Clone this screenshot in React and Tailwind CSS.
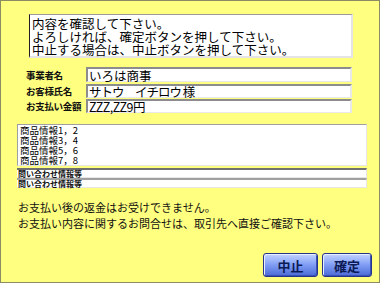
import React from 'react';

const jp = { fontFamily: '"Noto Sans CJK JP", "Noto Sans", sans-serif' };

function Field({ label, value, className = '', valueClass = '' }) {
  return (
    <div className={`flex items-center ${className}`}>
      <div className="w-[60px] pl-[25px] box-content shrink-0 text-[9.5px] font-bold leading-[12px] text-[#101010] whitespace-nowrap tracking-[-0.3px]">
        {label}
      </div>
      <div className="w-[266px] h-full bg-white border-t-2 border-l-2 border-t-[#8c8c8c] border-l-[#8c8c8c] border-b border-r-2 border-b-[#e8e8e8] border-r-[#e8e8e8] flex items-center pl-[1px]">
        <span className={`text-[12.5px] leading-[11px] text-black whitespace-nowrap ${valueClass}`}>{value}</span>
      </div>
    </div>
  );
}

function BlueButton({ children, width }) {
  return (
    <button
      className={`${width} h-[24px] rounded-[3px] border border-[#26358a] bg-gradient-to-b from-[#c4d4ff] via-[#7f9cf4] to-[#4c6ad6] shadow-[inset_1px_1px_0_#e8eeff,inset_-1px_-1px_0_#3a52b8] text-[13px] font-bold text-[#0c1a55] leading-none flex items-center justify-center`}
    >
      {children}
    </button>
  );
}

export default function App() {
  return (
    <div
      style={jp}
      className="w-[380px] h-[283px] bg-[#ffff80] border border-[#8c8c64] flex flex-col overflow-hidden"
    >
      {/* message */}
      <div className="mt-[13px] ml-[28px] w-[324px] h-[44px] bg-white border-t border-l border-t-[#9a9a9a] border-l-[#202020] border-r-2 border-b-2 border-r-[#e4e4e4] border-b-[#e4e4e4] pl-[2px] pt-[2px]">
        <p className="text-[12.5px] leading-[13px] text-black whitespace-nowrap">内容を確認して下さい。</p>
        <p className="text-[12.5px] leading-[13px] text-black whitespace-nowrap">よろしければ、確定ボタンを押して下さい。</p>
        <p className="text-[12.5px] leading-[13px] text-black whitespace-nowrap">中止する場合は、中止ボタンを押して下さい。</p>
      </div>

      {/* fields */}
      <div className="mt-[9px] flex flex-col">
        <Field label="事業者名" value="いろは商事" className="h-[15px]" />
        <Field label="お客様氏名" value="サトウ　イチロウ 様" className="h-[14px] mt-[2px]" valueClass="tracking-[-1px]" />
        <Field label="お支払い金額" value="ZZZ,ZZ9円" className="h-[14px] mt-[1px]" valueClass="tracking-[-0.5px]" />
      </div>

      {/* products */}
      <div className="mt-[11px] ml-[16px] w-[350px] h-[42px] bg-white border-t border-l border-t-[#a0a0a0] border-l-[#a0a0a0] border-r border-b border-r-[#e6e6e6] border-b-[#e6e6e6] pl-[2px]">
        {['商品情報1，2', '商品情報3，4', '商品情報5，6', '商品情報7，8'].map((t) => (
          <div key={t} className="h-[10px] text-[9.5px] leading-[10px] text-black whitespace-nowrap">{t}</div>
        ))}
      </div>

      <div className="mt-[2px] ml-[16px] w-[350px] h-[10px] bg-white border-t-2 border-t-[#707070] border-b border-r border-b-[#e6e6e6] border-r-[#e6e6e6] flex items-center pl-[1px]">
        <span className="text-[8px] font-bold leading-[7px] text-[#101010] whitespace-nowrap">問い合わせ情報等</span>
      </div>
      <div className="ml-[16px] w-[350px] h-[10px] bg-white border-t-2 border-t-[#a0a0a0] border-b border-r border-b-[#e6e6e6] border-r-[#e6e6e6] flex items-center pl-[1px]">
        <span className="text-[8px] font-bold leading-[7px] text-[#101010] whitespace-nowrap">問い合わせ情報等</span>
      </div>

      {/* notes */}
      <div className="mt-[11px] ml-[17px] text-[11px] leading-[16px] text-[#101010]">
        <p className="whitespace-nowrap">お支払い後の返金はお受けできません。</p>
        <p className="whitespace-nowrap">お支払い内容に関するお問合せは、取引先へ直接ご確認下さい。</p>
      </div>

      {/* buttons */}
      <div className="mt-auto mb-[5px] mr-[7px] flex justify-end gap-[4px]">
        <BlueButton width="w-[55px]">中止</BlueButton>
        <BlueButton width="w-[50px]">確定</BlueButton>
      </div>
    </div>
  );
}
